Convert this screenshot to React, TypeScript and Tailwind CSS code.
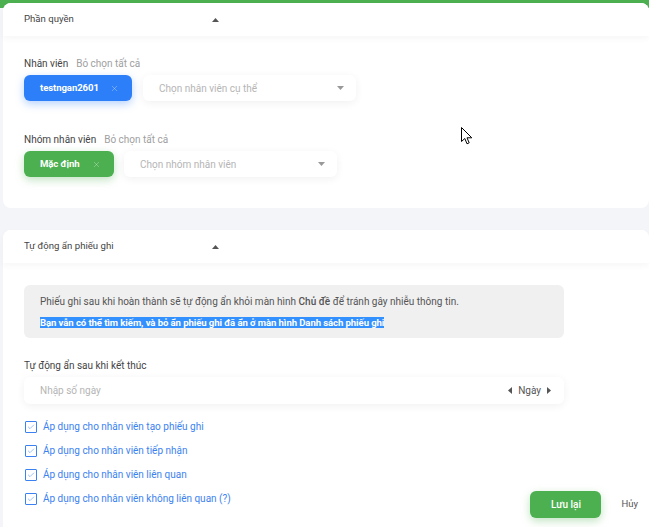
import { Check, X } from "lucide-react";

const Caret = ({ up, className }: { up?: boolean; className?: string }) => (
  <svg width="7" height="4" viewBox="0 0 7 4" className={className}>
    {up ? <path d="M0 4 L3.5 0 L7 4 Z" fill="currentColor" /> : <path d="M0 0 L7 0 L3.5 4 Z" fill="currentColor" />}
  </svg>
);

const SideArrow = ({ left }: { left?: boolean }) => (
  <svg width="4" height="7" viewBox="0 0 4 7" className="text-[#555]">
    {left ? <path d="M4 0 L0 3.5 L4 7 Z" fill="currentColor" /> : <path d="M0 0 L4 3.5 L0 7 Z" fill="currentColor" />}
  </svg>
);

const SectionHeader = ({ title }: { title: string }) => (
  <div className="flex h-[33px] items-center rounded-t-lg bg-white px-[21px] shadow-[0_3px_6px_rgba(0,0,0,0.035)]">
    <span className="w-[188px] text-[9.6px] text-[#444]">{title}</span>
    <Caret up className="text-[#555]" />
  </div>
);

const Chip = ({ label, color }: { label: string; color: "blue" | "green" }) => (
  <div
    className={
      color === "blue"
        ? "flex h-[26px] w-[108px] items-center justify-between rounded-md bg-[#2d7ff9] pl-4 pr-[13px] shadow-[0_3px_8px_rgba(45,127,249,0.35)]"
        : "flex h-[26px] w-[90px] items-center justify-between rounded-md bg-[#4caf50] pl-4 pr-[13px] shadow-[0_3px_8px_rgba(76,175,80,0.35)]"
    }
  >
    <span className="text-[9.6px] font-bold tracking-[-0.1px] text-white">{label}</span>
    <X size={9} strokeWidth={1.6} className="text-white/50" />
  </div>
);

const SelectBox = ({ placeholder }: { placeholder: string }) => (
  <div className="flex h-[26px] w-[213px] items-center justify-between rounded-md bg-white pl-4 pr-[12px] shadow-[0_2px_8px_rgba(0,0,0,0.06)]">
    <span className="text-[10px] text-[#b5b5b5]">{placeholder}</span>
    <Caret className="text-[#999]" />
  </div>
);

const CheckRow = ({ label }: { label: string }) => (
  <div className="flex h-[12px] items-center gap-[6px]">
    <div className="flex h-[12px] w-[12px] items-center justify-center rounded-[1px] border border-[#3b82f0] bg-white">
      <Check size={8} strokeWidth={1.5} className="text-[#3b82f0]" />
    </div>
    <span className="text-[10px] leading-[12px] text-[#3b82f0]">{label}</span>
  </div>
);

export default function App() {
  return (
    <div
      className="relative h-[527px] w-[649px] overflow-hidden bg-[linear-gradient(#4caf50_0_8px,#f4f5f9_8px)] pl-[3px] pt-[3px]"
      style={{ fontFamily: "Roboto, 'Noto Sans', sans-serif" }}
    >
      {/* Phân quyền */}
      <div className="h-[205px] rounded-lg bg-white">
        <SectionHeader title="Phần quyền" />
        <div className="px-[21px] pt-[20px]">
          <div className="flex items-baseline gap-[8px] text-[10px]">
            <span className="text-[#444]">Nhân viên</span>
            <span className="text-[#a0a0a0]">Bỏ chọn tất cả</span>
          </div>
          <div className="mt-[4px] flex items-center gap-[11px]">
            <Chip label="testngan2601" color="blue" />
            <SelectBox placeholder="Chọn nhân viên cụ thể" />
          </div>
          <div className="mt-[31px] flex items-baseline gap-[8px] text-[10px]">
            <span className="text-[#444]">Nhóm nhân viên</span>
            <span className="text-[#a0a0a0]">Bỏ chọn tất cả</span>
          </div>
          <div className="mt-[4px] flex items-center gap-[10px]">
            <Chip label="Mặc định" color="green" />
            <SelectBox placeholder="Chọn nhóm nhân viên" />
          </div>
        </div>
      </div>

      {/* Tự động ẩn phiếu ghi */}
      <div className="mt-[22px] h-[320px] rounded-lg bg-white">
        <SectionHeader title="Tự động ẩn phiếu ghi" />
        <div className="px-[21px] pt-[22px]">
          <div className="w-[540px] rounded-md bg-[#f0f0f0] px-4 pb-[9px] pt-[10px] text-[10px]">
            <p className="leading-[13px] text-[#555]">
              Phiếu ghi sau khi hoàn thành sẽ tự động ẩn khỏi màn hình <span className="font-medium">Chủ đề</span> để tránh gây nhiễu thông tin.
            </p>
            <p className="mt-[8px] leading-[13px]">
              <span className="bg-[#3390ff] text-[9.6px] font-bold tracking-[-0.1px] text-white">
                Bạn vẫn có thể tìm kiếm, và bỏ ẩn phiếu ghi đã ẩn ở màn hình Danh sách phiếu ghi
              </span>
            </p>
          </div>

          <div className="mt-[20px] text-[10px] text-[#444]">Tự động ẩn sau khi kết thúc</div>
          <div className="mt-[4px] flex h-[27px] w-[540px] items-center justify-between rounded-md bg-white pl-4 pr-[13px] shadow-[0_2px_8px_rgba(0,0,0,0.06)]">
            <span className="text-[10px] text-[#b5b5b5]">Nhập số ngày</span>
            <div className="flex items-center gap-[6px]">
              <SideArrow left />
              <span className="text-[10px] text-[#555]">Ngày</span>
              <SideArrow />
            </div>
          </div>

          <div className="mt-[17px] flex flex-col gap-[12px] pl-[1px]">
            <CheckRow label="Áp dụng cho nhân viên tạo phiếu ghi" />
            <CheckRow label="Áp dụng cho nhân viên tiếp nhận" />
            <CheckRow label="Áp dụng cho nhân viên liên quan" />
            <CheckRow label="Áp dụng cho nhân viên không liên quan (?)" />
          </div>
        </div>
      </div>

      {/* fixed footer actions */}
      <div className="absolute bottom-[9px] right-[11px] flex items-center gap-[20px]">
        <button className="h-[27px] w-[71px] rounded-md bg-[#4caf50] text-[10px] font-medium text-white shadow-[0_3px_8px_rgba(76,175,80,0.35)]">
          Lưu lại
        </button>
        <span className="text-[9.5px] text-[#555]">Hủy</span>
      </div>

      {/* mouse cursor */}
      <svg className="absolute left-[461px] top-[127px]" width="12" height="19" viewBox="0 0 12 19">
        <path d="M0.5 0.5 L0.5 14.5 L3.8 11.5 L6 16.8 L8.2 15.8 L6 10.8 L10.8 10.8 Z" fill="white" stroke="black" strokeWidth="1" strokeLinejoin="round" />
      </svg>
    </div>
  );
}
